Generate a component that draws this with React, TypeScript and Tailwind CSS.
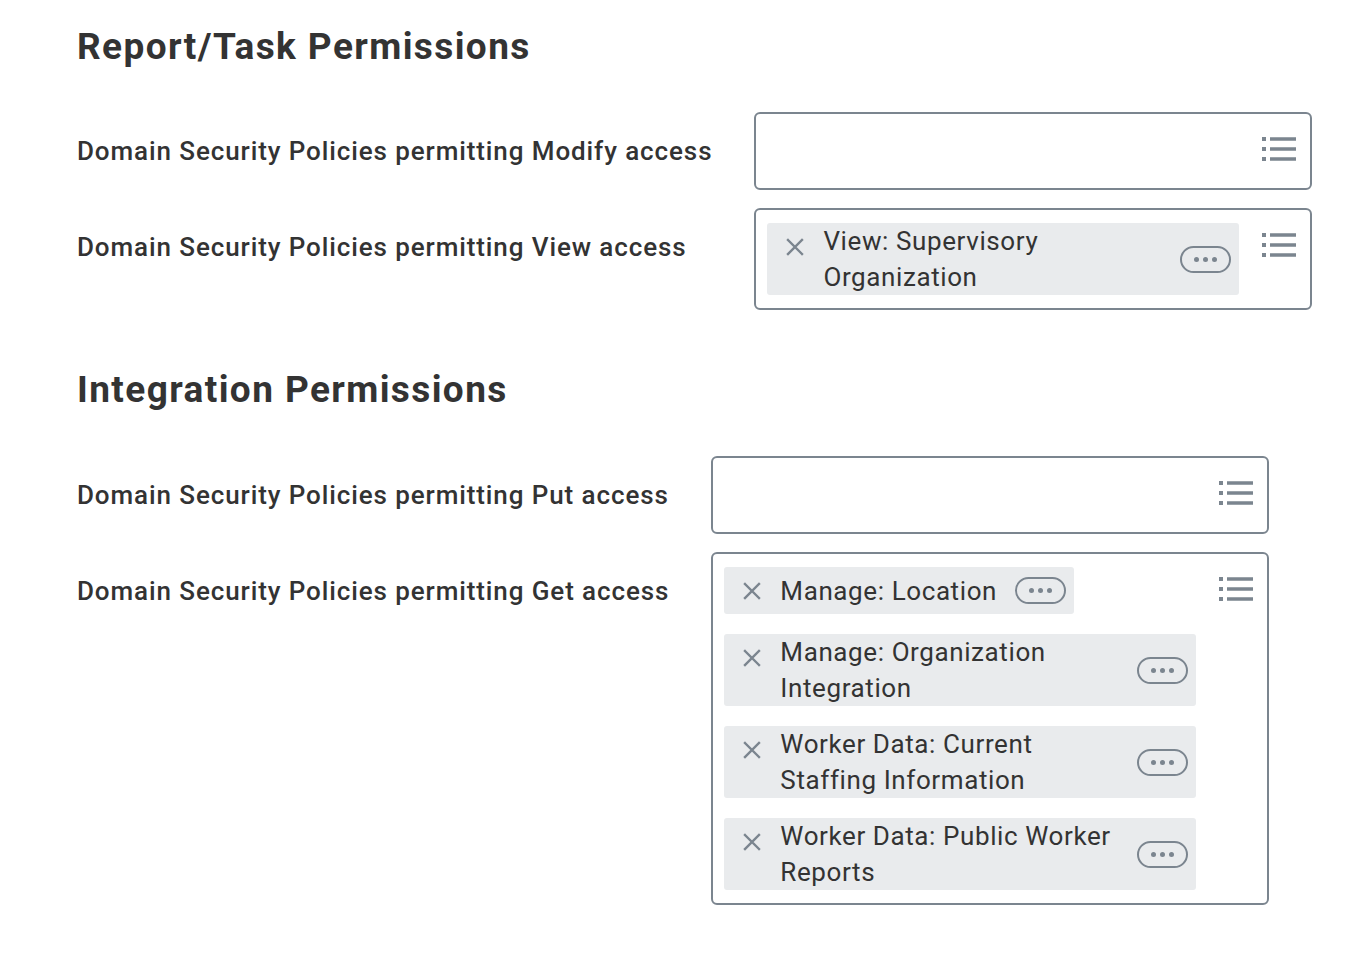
const FONT = { fontFamily: 'Roboto, "Noto Sans", sans-serif' }

function ListIcon() {
  return (
    <svg width="34" height="26" viewBox="0 0 34 26" className="shrink-0 mt-[9px]">
      {[3, 13, 23].map((y) => (
        <g key={y}>
          <rect x="0" y={y - 2} width="4" height="4" fill="#7b858f" />
          <rect x="8" y={y - 1.75} width="26" height="3.5" fill="#7b858f" />
        </g>
      ))}
    </svg>
  )
}

function XIcon() {
  return (
    <svg width="18" height="18" viewBox="0 0 18 18">
      <path d="M2 2 L16 16 M16 2 L2 16" stroke="#7b858f" strokeWidth="2.4" strokeLinecap="square" />
    </svg>
  )
}

function DotsButton() {
  return (
    <span className="shrink-0 w-[51px] h-[27px] rounded-full border-2 border-[#7b858f] flex items-center justify-center gap-[4px]">
      <span className="w-[5px] h-[5px] rounded-full bg-[#7b858f]" />
      <span className="w-[5px] h-[5px] rounded-full bg-[#7b858f]" />
      <span className="w-[5px] h-[5px] rounded-full bg-[#7b858f]" />
    </span>
  )
}

function Chip({ text }: { text: string }) {
  return (
    <div className="max-w-[472px] w-fit min-h-[47px] bg-[#e9ebed] rounded-[3px] flex items-center pr-[8px]">
      <span className="self-start h-[47px] flex items-center ml-[19px] mr-[19px] shrink-0">
        <XIcon />
      </span>
      <span className="max-w-[339px] text-[26px] leading-[36px] tracking-[0.6px] text-[#333333] mr-[18px]">
        {text}
      </span>
      <span className="ml-auto">
        <DotsButton />
      </span>
    </div>
  )
}

function Field({ chips = [] }: { chips?: string[] }) {
  return (
    <div className="w-[558px] min-h-[78px] border-2 border-[#7b858f] rounded-[6px] bg-white flex pl-[11px] pr-[14px] py-[13px]">
      <div className="w-[472px] flex flex-col gap-[20px]">
        {chips.map((c) => (
          <Chip key={c} text={c} />
        ))}
      </div>
      <div className="w-[23px]" />
      <ListIcon />
    </div>
  )
}

function Row({ label, chips }: { label: string; chips?: string[] }) {
  return (
    <>
      <div className="pt-[21px] text-[26px] leading-[36px] tracking-[0.9px] font-medium text-[#333333] whitespace-nowrap">
        {label}
      </div>
      <Field chips={chips} />
    </>
  )
}

export default function App() {
  return (
    <div className="min-h-[962px] bg-white pl-[77px] pt-[24px]" style={FONT}>
      <h2 className="text-[37px] leading-[46px] tracking-[1.4px] font-bold text-[#333333] mb-[42px]">
        Report/Task Permissions
      </h2>
      <div className="grid grid-cols-[auto_558px] w-fit gap-x-[42px] gap-y-[18px]">
        <Row label="Domain Security Policies permitting Modify access" />
        <Row
          label="Domain Security Policies permitting View access"
          chips={['View: Supervisory Organization']}
        />
      </div>

      <h2 className="text-[37px] leading-[46px] tracking-[1.4px] font-bold text-[#333333] mt-[57px] mb-[43px]">
        Integration Permissions
      </h2>
      <div className="grid grid-cols-[auto_558px] w-fit gap-x-[42px] gap-y-[18px]">
        <Row label="Domain Security Policies permitting Put access" />
        <Row
          label="Domain Security Policies permitting Get access"
          chips={[
            'Manage: Location',
            'Manage: Organization Integration',
            'Worker Data: Current Staffing Information',
            'Worker Data: Public Worker Reports',
          ]}
        />
      </div>
    </div>
  )
}
